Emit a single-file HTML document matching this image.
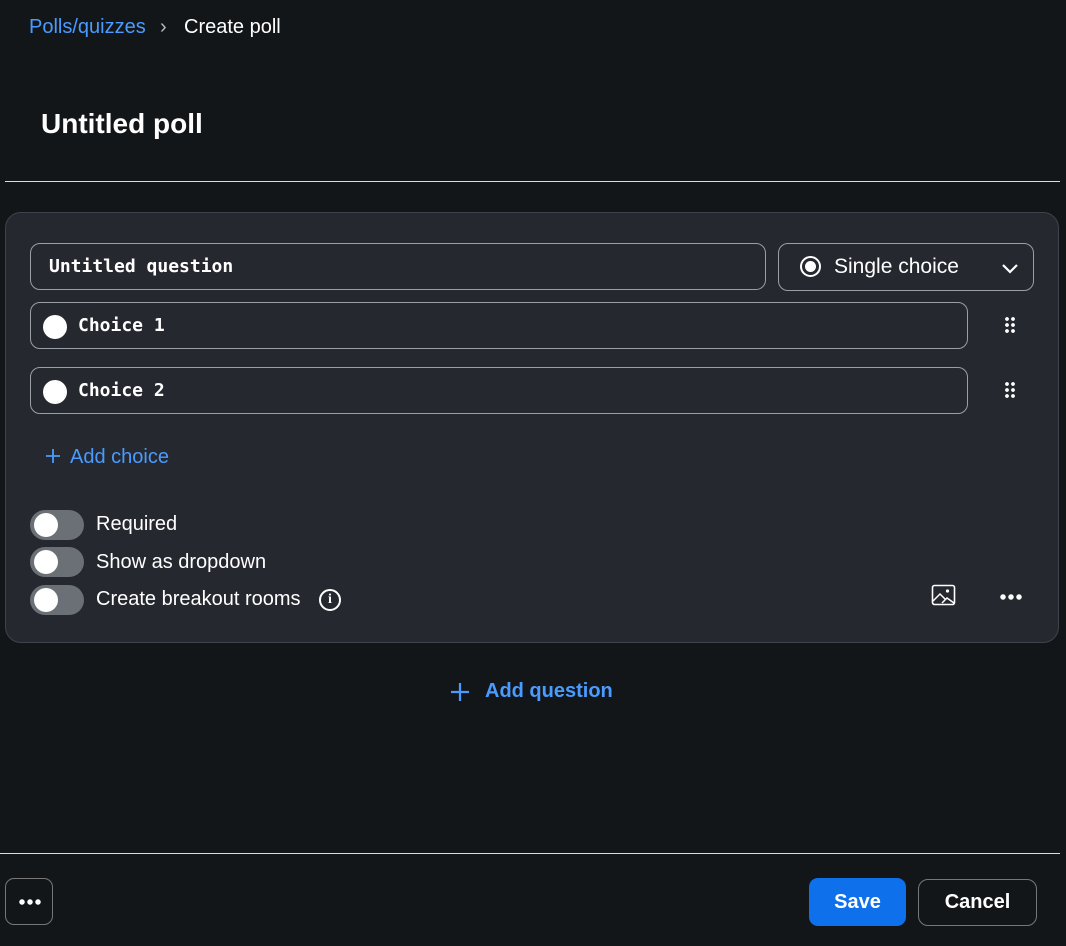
<!DOCTYPE html>
<html><head><meta charset="utf-8"><style>
*{box-sizing:border-box;margin:0;padding:0}
body{width:1066px;height:946px;background:#131619;color:#fff;font-family:"Liberation Sans",sans-serif;position:relative;overflow:hidden}
.abs{position:absolute}
.mono{font-family:"DejaVu Sans Mono",monospace;font-size:18px;font-weight:bold}
.field{position:absolute;border:1px solid #9a9ea6;border-radius:10px;background:#25282f}
.tog{position:absolute;left:30px;width:54px;height:30px;border-radius:15px;background:#6b6f76}
.tog:after{content:"";position:absolute;left:4px;top:3px;width:24px;height:24px;border-radius:50%;background:#fff}
.lbl{position:absolute;left:96px;font-size:20px}
.dot{position:absolute;width:24px;height:24px;border-radius:50%;background:#fff;left:12px;top:12px}
.grip{position:absolute;width:12px;height:18px;background:radial-gradient(circle,#fff 1.7px,transparent 2.1px) 0 0/6px 6px}
</style></head><body>
<div class="abs" style="left:29px;top:16px;font-size:20px;color:#4a9bff">Polls/quizzes</div>
<div class="abs" style="left:160px;top:16px;font-size:20px;color:#bbb">›</div>
<div class="abs" style="left:184px;top:16px;font-size:20px">Create poll</div>
<div class="abs" style="left:41px;top:108px;font-size:28px;font-weight:bold">Untitled poll</div>
<div class="abs" style="left:5px;top:181px;width:1055px;height:1px;background:#ddd"></div>
<div class="abs" style="left:5px;top:212px;width:1054px;height:431px;background:#25282f;border:1px solid #3f434a;border-radius:16px"></div>
<div class="field" style="left:30px;top:243px;width:736px;height:47px"><span class="mono abs" style="left:18px;top:12px">Untitled question</span></div>
<div class="field" style="left:778px;top:243px;width:256px;height:48px">
<div class="abs" style="left:21px;top:12px;width:21px;height:21px;border:2px solid #fff;border-radius:50%"><div class="abs" style="left:3px;top:3px;width:11px;height:11px;border-radius:50%;background:#fff"></div></div>
<span class="abs" style="left:55px;top:11px;font-size:21px">Single choice</span>
<svg class="abs" style="left:222px;top:17px" width="18" height="14" viewBox="0 0 18 14"><path d="M2 4l7 7 7-7" stroke="#fff" stroke-width="2.2" fill="none"/></svg></div>
<div class="field" style="left:30px;top:302px;width:938px;height:47px"><div class="dot"></div><span class="mono abs" style="left:47px;top:12px">Choice 1</span></div>
<div class="grip" style="left:1004px;top:316px"></div>
<div class="field" style="left:30px;top:367px;width:938px;height:47px"><div class="dot"></div><span class="mono abs" style="left:47px;top:12px">Choice 2</span></div>
<div class="grip" style="left:1004px;top:381px"></div>
<svg class="abs" style="left:45px;top:448px" width="16" height="16" viewBox="0 0 16 16"><path d="M8 1v14M1 8h14" stroke="#4a9bff" stroke-width="1.8"/></svg>
<div class="abs" style="left:70px;top:446px;font-size:20px;color:#4a9bff">Add choice</div>
<div class="tog" style="top:510px"></div><div class="lbl" style="top:513px">Required</div>
<div class="tog" style="top:547px"></div><div class="lbl" style="top:551px">Show as dropdown</div>
<div class="tog" style="top:585px"></div><div class="lbl" style="top:588px">Create breakout rooms</div>
<div class="abs" style="left:319px;top:589px;width:22px;height:22px;border:2px solid #fff;border-radius:50%;font-size:14px;font-weight:bold;text-align:center;line-height:18px;font-family:'Liberation Serif',serif">i</div>
<svg class="abs" style="left:931px;top:584px" width="26" height="24" viewBox="0 0 26 24"><rect x="1.5" y="1.5" width="22" height="19" rx="2" stroke="#fff" stroke-width="1.6" fill="none"/><path d="M2 17l7-7 6 6M11 19l5-5 7 5" stroke="#fff" stroke-width="1.5" fill="none"/><circle cx="16.5" cy="7" r="1.6" fill="#fff"/></svg>
<div class="abs" style="left:999px;top:594px;width:24px;height:6px;background:radial-gradient(circle,#fff 2.4px,transparent 3px) 0 0/8px 6px"></div>
<svg class="abs" style="left:450px;top:682px" width="20" height="20" viewBox="0 0 20 20"><path d="M10 1v18M1 10h18" stroke="#4a9bff" stroke-width="2.2"/></svg>
<div class="abs" style="left:485px;top:680px;font-size:20px;font-weight:bold;color:#4a9bff">Add question</div>
<div class="abs" style="left:0;top:853px;width:1060px;height:1px;background:#ddd"></div>
<div class="abs" style="left:5px;top:878px;width:48px;height:47px;border:1px solid #777;border-radius:9px"><div class="abs" style="left:12px;top:20px;width:24px;height:6px;background:radial-gradient(circle,#fff 2.4px,transparent 3px) 0 0/8px 6px"></div></div>
<div class="abs" style="left:809px;top:878px;width:97px;height:48px;background:#0e71eb;border-radius:9px;font-size:20px;font-weight:bold;text-align:center;line-height:48px">Save</div>
<div class="abs" style="left:918px;top:879px;width:119px;height:47px;border:1px solid #777;border-radius:10px;font-size:20px;font-weight:bold;text-align:center;line-height:45px">Cancel</div>
</body></html>
